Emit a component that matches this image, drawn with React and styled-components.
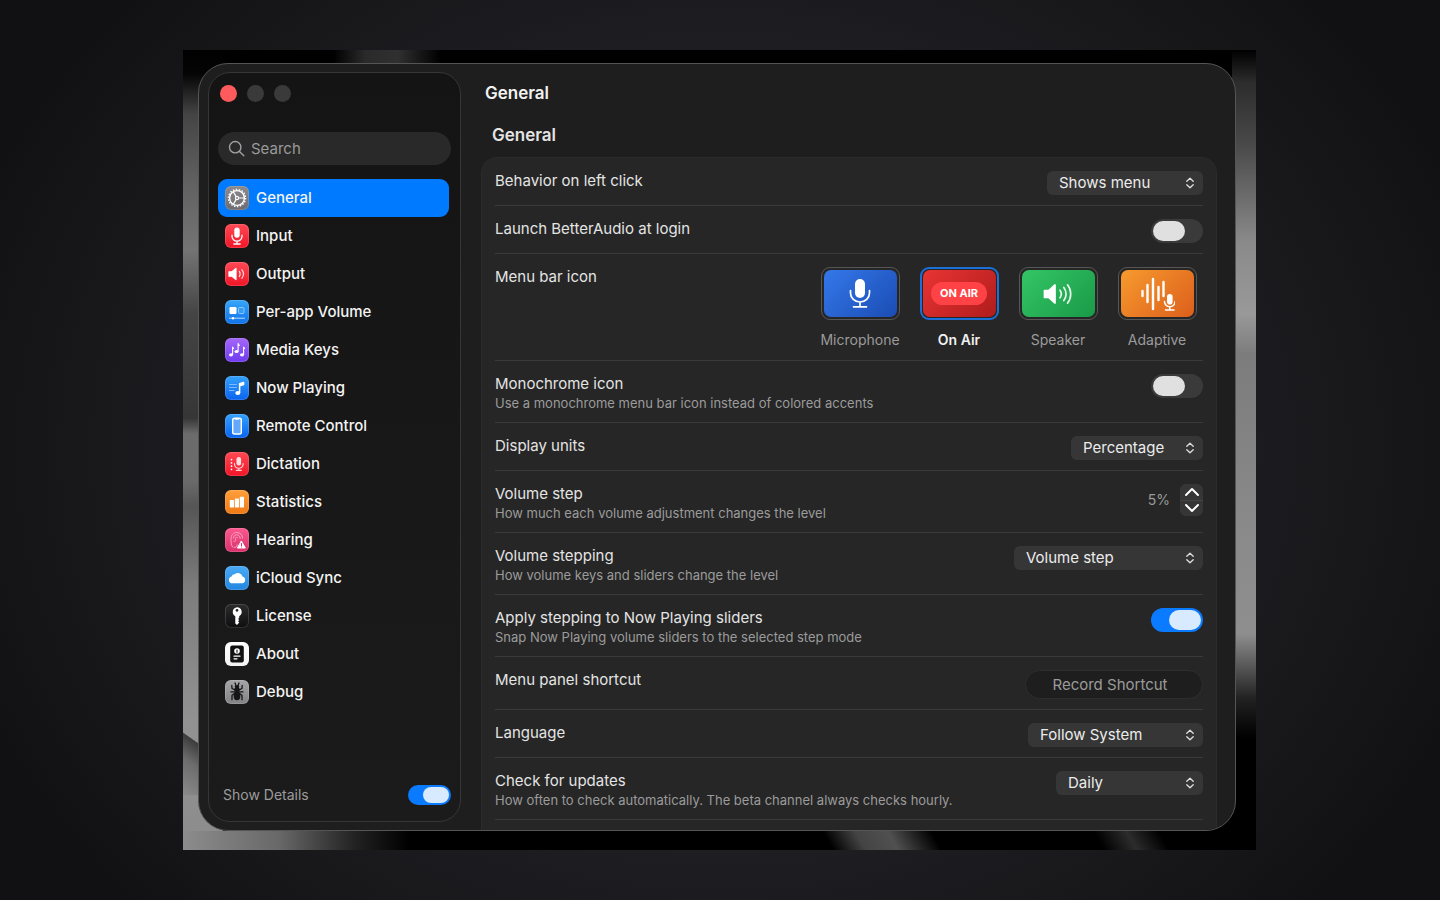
import React, { useState } from 'react';
import styled, { createGlobalStyle, css } from 'styled-components';

const Global = createGlobalStyle`
  *, *::before, *::after { box-sizing: border-box; }
  html, body { margin: 0; background: #111113; }
  body, button, input, select {
    font-family: Inter, "Liberation Sans", sans-serif;
    font-size: 15px;
    line-height: 20px;
    color: #e4e4e4;
  }
  button, input, select { margin: 0; padding: 0; border: 0; background: none; }
  h1, h2, p, ul { margin: 0; padding: 0; }
`;

const Page = styled.div`
  display: flex;
  min-height: 100vh;
  padding: 50px 184px 50px 183px;
  background: radial-gradient(ellipse 56% 75% at 50% 50%, #25252e 0%, #1f1f24 55%, #18181b 80%, #111113 100%);
`;

const Wallpaper = styled.div`
  flex: 1;
  display: flex;
  min-width: 0;
  padding: 13px 20px 19px 15px;
  background:
    linear-gradient(90deg, transparent 14%, #2a2a2a 17%, #303030 20%, transparent 24%) top / 100% 13px no-repeat,
    linear-gradient(60deg, transparent 60%, #444 63%, #505050 66%, transparent 70%, transparent 85%, #2c2c2c 88%, transparent 91%) bottom / 100% 19px no-repeat,
    linear-gradient(90deg, #8c8c8c 0, #686868 9%, #222 16%, #000 21%) bottom / 100% 19px no-repeat,
    linear-gradient(215deg, transparent 0, transparent 50%, #3c3c3c 51%, #6c6c6c 70%, #8a8a8a 100%) 0 640px / 30px 105px no-repeat,
    linear-gradient(180deg, #000 0, #050505 3%, #444 8%, #626262 17%, #747474 25%, #444 33%, #363636 46%, #6c6c6c 48%, #6a6a6a 54%, #555 57%, #7c7c7c 67%, #929292 84%, #8c8c8c 100%) left / 40px 100% no-repeat,
    linear-gradient(180deg, #000 0, #2c2c2c 4%, #4a4a4a 12%, #8a8a8a 24%, #999 33%, #7c7c7c 38%, #8a8a8a 60%, #8e8e8e 73%, #222 81%, #000 86%) right / 24px 100% no-repeat,
    #000;
`;

const Window = styled.div`
  flex: 1;
  display: flex;
  min-width: 0;
  padding: 8px 18px 8px 9px;
  border: 1px solid #555;
  border-radius: 30px;
  background: #1e1e1e;
  overflow: hidden;
`;

const Sidebar = styled.aside`
  flex: 0 0 253px;
  min-width: 0;
  display: flex;
  flex-direction: column;
  padding: 12px 9px 16px;
  border: 1px solid #363636;
  border-radius: 22px;
  background: linear-gradient(180deg, #141414, #1b1b1b);
`;

const Lights = styled.div`
  display: flex;
  gap: 10px;
  padding-left: 2px;
`;

const Light = styled.button`
  width: 17px;
  height: 17px;
  border-radius: 50%;
  background: ${(p) => (p.$close ? '#ff5b5c' : '#3a3a3a')};
`;

const SearchBox = styled.label`
  display: flex;
  align-items: center;
  gap: 6px;
  height: 33px;
  margin: 30px 0 14px;
  padding: 0 10px;
  border-radius: 17px;
  background: #292929;
  svg { flex: none; }
`;

const SearchInput = styled.input`
  flex: 1;
  min-width: 0;
  outline: none;
  &::placeholder { color: #9a9a9a; opacity: 1; }
`;

const NavList = styled.ul`
  list-style: none;
  flex: 1;
  padding-right: 2px;
`;

const NavLink = styled.a`
  display: flex;
  align-items: center;
  gap: 7px;
  height: 38px;
  padding: 0 7px;
  border-radius: 9px;
  color: #f4f4f4;
  font-size: 15px;
  font-weight: 500;
  text-decoration: none;
  background: ${(p) => (p.$active ? '#007aff' : 'none')};
`;

const Tile = styled.span`
  flex: none;
  display: flex;
  width: 24px;
  height: 24px;
  border-radius: 6px;
  background: linear-gradient(180deg, ${(p) => p.$from}, ${(p) => p.$to});
  box-shadow: inset 0 0 0 1px rgba(255, 255, 255, 0.14);
`;

const SidebarFoot = styled.label`
  display: flex;
  align-items: center;
  justify-content: space-between;
  padding-left: 5px;
  color: #9b9b9b;
  font-size: 14px;
`;

const Main = styled.main`
  flex: 1;
  min-width: 0;
  display: flex;
  flex-direction: column;
  padding-left: 20px;
  margin-bottom: -8px;
`;

const Title = styled.h1`
  padding: 9px 0 0 4px;
  font-size: 17px;
  font-weight: 600;
  line-height: 24px;
  color: #f2f2f2;
`;

const SectionTitle = styled.h2`
  padding: 18px 0 10px 11px;
  font-size: 17px;
  font-weight: 600;
  line-height: 24px;
`;

const Card = styled.section`
  flex: 1;
  padding: 0 13px;
  border: 1px solid #2b2b2b;
  border-bottom: 0;
  border-radius: 16px 16px 0 0;
  background: #262626;
`;

const Row = styled.div`
  display: flex;
  justify-content: space-between;
  align-items: flex-start;
  height: ${(p) => p.$height}px;
  padding: 13px 0 0;
  border-bottom: 1px solid #3a3a3a;
`;

const RowText = styled.div`
  display: flex;
  flex-direction: column;
`;

const RowLabel = styled.label`
  font-size: 15px;
  line-height: 20px;
`;

const RowNote = styled.p`
  color: #9b9b9b;
  font-size: 13px;
  line-height: 18px;
`;

const SelectWrap = styled.div`
  display: grid;
  align-items: center;
  width: ${(p) => p.$width}px;
  height: 24px;
  border-radius: 6px;
  background: #363636;
  > * { grid-area: 1 / 1; }
  svg { justify-self: end; margin-right: 7px; pointer-events: none; }
`;

const Select = styled.select`
  appearance: none;
  width: 100%;
  height: 24px;
  padding: 0 28px 0 12px;
  color: #ececec;
  line-height: 24px;
`;

const Switch = styled.input.attrs({ type: 'checkbox', role: 'switch' })`
  appearance: none;
  flex: none;
  display: flex;
  width: ${(p) => (p.$small ? 43 : 52)}px;
  height: ${(p) => (p.$small ? 20 : 24)}px;
  padding: 2px;
  border-radius: 12px;
  background: #3a3a3a;
  &::before {
    content: '';
    width: ${(p) => (p.$small ? 26 : 32)}px;
    border-radius: 10px;
    background: #e0e0e0;
  }
  &:checked { justify-content: flex-end; background: #0a7aff; }
  &:checked::before { background: #d8eaff; }
`;

const IconChoices = styled.div`
  display: flex;
  gap: 7px;
`;

const Choice = styled.label`
  display: flex;
  flex-direction: column;
  align-items: center;
  gap: 10px;
  width: 92px;
  font-size: 14px;
  color: ${(p) => (p.$on ? '#f0f0f0' : '#9b9b9b')};
  font-weight: ${(p) => (p.$on ? 600 : 400)};
`;

const ChoiceTile = styled.span`
  display: grid;
  place-items: center;
  width: 79px;
  height: 53px;
  padding: 1px;
  border: 1px solid #565656;
  border-radius: 9px;
  ${(p) => p.$on && css`border: 2px solid #1b6fd6; padding: 0;`}
  > * { grid-area: 1 / 1; }
`;

const ChoiceRadio = styled.input.attrs({ type: 'radio' })`
  appearance: none;
  width: 73px;
  height: 47px;
  border-radius: 7px;
  background: linear-gradient(135deg, ${(p) => p.$from}, ${(p) => p.$to});
`;

const AirBadge = styled.span`
  padding: 0 9px;
  border-radius: 12px;
  background: #ff4245;
  color: #fff;
  font-size: 11px;
  font-weight: 700;
  line-height: 23px;
  pointer-events: none;
`;

const StepperGroup = styled.div`
  display: flex;
  align-items: center;
  gap: 10px;
  color: #9b9b9b;
  font-size: 14px;
`;

const Stepper = styled.div`
  display: flex;
  flex-direction: column;
  width: 23px;
  border-radius: 6px;
  background: #363636;
`;

const StepButton = styled.button`
  display: flex;
  align-items: center;
  justify-content: center;
  height: 16px;
  & + & { border-top: 1px solid #444; }
`;

const ShortcutButton = styled.button`
  width: 178px;
  height: 29px;
  padding-right: 8px;
  border: 1px solid #2e2e2e;
  border-radius: 15px;
  background: #1e1e1e;
  color: #9b9b9b;
`;

const Svg = ({ size = 24, box = 24, children, ...rest }) => (
  <svg width={size} height={size} viewBox={`0 0 ${box} ${box}`} fill="none" stroke="#fff" strokeLinecap="round" strokeLinejoin="round" aria-hidden="true" {...rest}>
    {children}
  </svg>
);

const Gear = () => (
  <Svg strokeWidth="1.2">
    <circle cx="12" cy="12" r="7.400" strokeWidth="1.400" />
    <circle cx="12" cy="12" r="8.600" strokeWidth="1.400" strokeDasharray="1.500 1.500" strokeLinecap="butt" />
    <circle cx="12" cy="12" r="1.600" />
    <path d="M13.800 12H19M11.100 10.500 8.400 5.900M11.100 13.500 8.400 18.100" />
  </Svg>
);

const Mic = () => (
  <Svg strokeWidth="1.3">
    <rect x="9.3" y="3.6" width="5.4" height="10.2" rx="2.7" fill="#fff" stroke="none" />
    <path d="M7 11.2v1a5 5 0 0 0 10 0v-1M12 17.3v2.4M8.8 20h6.4" />
  </Svg>
);

const Speaker = () => (
  <Svg strokeWidth="1.2">
    <path d="M4 9.8h3l4-3.4v11.2l-4-3.4H4z" fill="#fff" />
    <path d="M14.3 9.4c1 1.5 1 3.7 0 5.2M16.8 7.7c2 2.500 2 6.100 0 8.600" stroke="#ffd4d6" />
  </Svg>
);

const Apps = () => (
  <Svg strokeWidth="1">
    <rect x="4.500" y="7" width="7" height="7" rx="1.200" fill="#fff" stroke="none" />
    <rect x="13.500" y="7.500" width="5.500" height="6" rx="1" stroke="#8cc8ff" fill="#339cf5" />
    <path d="M4.500 18.200h15" stroke="#b5dcff" />
    <circle cx="8" cy="18.200" r="1.200" fill="#fff" stroke="none" />
  </Svg>
);

const Notes = () => (
  <Svg strokeWidth="1.100">
    <g fill="#fff" stroke="none">
      <ellipse cx="6" cy="16.800" rx="2" ry="1.600" />
      <ellipse cx="11.500" cy="13.500" rx="2" ry="1.600" />
      <ellipse cx="17" cy="16.800" rx="2" ry="1.600" />
    </g>
    <path d="M7.600 16.500V9l1 1.500M13.100 13.200V5.500l1.200 2M18.600 16.500V9l1 1.500" />
  </Svg>
);

const NowPlaying = () => (
  <Svg strokeWidth="1.500">
    <path d="M4.500 8.500h7M4.500 11.500h7M4.500 14.500h4.500" stroke="#7fbcff" strokeWidth="1" />
    <path d="M14.600 16.500V7.600l4-1.200v2.200l-4 1.200" fill="#fff" />
    <ellipse cx="12.800" cy="17" rx="2.500" ry="2" fill="#fff" stroke="none" />
  </Svg>
);

const Phone = () => (
  <Svg strokeWidth="1.400">
    <rect x="7.700" y="4.200" width="8.600" height="15.800" rx="1.800" fill="#62a9fb" />
    <path d="M10.500 4.800h3" strokeWidth="1.800" />
  </Svg>
);

const Dictation = () => (
  <Svg strokeWidth="1.200">
    <path d="M6.500 7.500v10" strokeDasharray="0.100 3.200" strokeWidth="1.700" />
    <rect x="11.500" y="5" width="4.600" height="8.600" rx="2.300" fill="#ffe1e3" stroke="none" />
    <path d="M9.500 11.500v.5a4.300 4.300 0 0 0 8.600 0v-.5M13.800 16.500v1.600M11.300 18.300h5" stroke="#ffd4d6" />
  </Svg>
);

const Bars = () => (
  <Svg stroke="none" fill="#fff">
    <rect x="4.800" y="10" width="4.200" height="7.500" rx=".6" />
    <rect x="9.800" y="8.500" width="4.200" height="9" rx=".6" />
    <rect x="14.800" y="6.800" width="4.200" height="10.700" rx=".6" />
  </Svg>
);

const Hearing = () => (
  <Svg strokeWidth="1" stroke="#ff9fbd">
    <path d="M7.500 19c-1.200-2-1.500-4-1.500-7.500C6 7 8.200 4.500 11.800 4.500S17.600 7 17.600 10M8.500 10c0-2 1.200-3.200 3.300-3.200s3.400 1.600 3.400 3.600M9 13.500c1.500 0 2.200-1 1.600-2.300-.5-1.200.5-2.300 1.700-1.800M9 19.300c2 .6 3.200-.8 3.200-2.500" />
    <path d="M16.500 13.300 20.300 20h-7.600z" fill="#fff" stroke="#fff" />
    <path d="M16.500 15.500v2.200M16.500 19v.1" stroke="#e0356f" />
  </Svg>
);

const Cloud = () => (
  <Svg stroke="none" fill="#fff">
    <path d="M7.300 17.300a3.500 3.500 0 0 1-.7-6.900 3.100 3.100 0 0 1 3.100-2.200A4.700 4.700 0 0 1 17.500 10.600a3.400 3.400 0 0 1-.3 6.700z" />
  </Svg>
);

const Key = () => (
  <Svg stroke="none" fill="#fff">
    <path fillRule="evenodd" d="M12 3.200a4.800 4.800 0 0 1 2.200 9v1.500l-1.100 1.200 1.100 1.200-1.100 1.200 1.100 1.300-2.200 2.500-1.700-1.600v-7.300A4.800 4.800 0 0 1 12 3.200zm0 1.700a1.400 1.400 0 1 0 0 2.800 1.400 1.400 0 0 0 0-2.800z" />
  </Svg>
);

const About = () => (
  <Svg strokeWidth="1.200">
    <rect x="5.200" y="3.500" width="13.600" height="17" rx="2" fill="#111" stroke="none" />
    <circle cx="12" cy="9" r="2.800" fill="#fff" stroke="none" />
    <path d="M12 8v2.200" stroke="#111" strokeWidth="1.100" />
    <path d="M9 14.200h6M9 16.800h3" />
  </Svg>
);

const Bug = () => (
  <Svg stroke="#151515" strokeWidth="1.300">
    <ellipse cx="12" cy="15.800" rx="3.400" ry="4.500" fill="#151515" stroke="none" />
    <ellipse cx="12" cy="9.800" rx="2.800" ry="2.400" fill="#151515" stroke="none" />
    <ellipse cx="12" cy="6.700" rx="2.300" ry="1.800" fill="#151515" stroke="none" />
    <path d="M11 5.500 10 3M13 5.500 14 3M10 9.800 7 8.500 6.800 5.500M14 9.800l3-1.300.2-3M10 11.900H6M14 11.900h4M9.500 13.500 7 15.200v4.500M14.500 13.500l2.500 1.700v4.500" />
  </Svg>
);

const BigMic = () => (
  <Svg size={32} box={32} strokeWidth="1.700">
    <rect x="11" y="1" width="10" height="19" rx="5" fill="#fff" stroke="none" />
    <path d="M6.500 12.500v2.500a9.500 9 0 0 0 19 0v-2.500M16 24v4.500M9.500 28.800h13" />
  </Svg>
);

const BigSpeaker = () => (
  <Svg size={32} box={32} strokeWidth="1.700">
    <path d="M2.500 12.500h4.500l6-5.500v18l-6-5.500H2.500z" fill="#fff" />
    <path d="M18 12.200c1.600 2.300 1.600 5.300 0 7.600M21.800 9.500c3 3.800 3 9.200 0 13M25.500 6.800c4.300 5.400 4.300 13 0 18.400" stroke="#e6f8ec" />
  </Svg>
);

const Adaptive = () => (
  <Svg size={36} box={36} strokeWidth="2.400">
    <path d="M3.500 15v5M8.500 9v17M14 3v30M19.500 11v13M24.500 6v14" />
    <rect x="28" y="18" width="5.600" height="10.500" rx="2.800" fill="#fff" stroke="none" />
    <path d="M25.500 25.500a5.300 5.300 0 0 0 10.600 0M30.800 31v2.500M26.500 34h8.500" strokeWidth="1.500" />
  </Svg>
);

const UpDown = () => (
  <Svg size={12} box={12} strokeWidth="1.400" stroke="#dcdcdc">
    <path d="M2.800 4.200 6 1.200l3.200 3M2.800 7.800 6 10.800l3.200-3" />
  </Svg>
);

const NAV = [
  ['General', Gear, '#8b8b90', '#6b6b70'],
  ['Input', Mic, '#ff4a55', '#f01527'],
  ['Output', Speaker, '#ff4a55', '#f01527'],
  ['Per-app Volume', Apps, '#36a6f8', '#1173e8'],
  ['Media Keys', Notes, '#a567fa', '#6f3af0'],
  ['Now Playing', NowPlaying, '#36a2fb', '#0a63f0'],
  ['Remote Control', Phone, '#36a2fb', '#0a63f0'],
  ['Dictation', Dictation, '#ff4a55', '#f01527'],
  ['Statistics', Bars, '#ffa03c', '#ef7a14'],
  ['Hearing', Hearing, '#fb5a90', '#d9306b'],
  ['iCloud Sync', Cloud, '#4aaaf5', '#2386e0'],
  ['License', Key, '#2c2c2e', '#0e0e0f'],
  ['About', About, '#ffffff', '#f2f2f2'],
  ['Debug', Bug, '#a5a5a7', '#838385'],
];

const CHOICES = [
  ['Microphone', BigMic, '#3478ea', '#1b4cb4'],
  ['On Air', null, '#e93434', '#b01c1c'],
  ['Speaker', BigSpeaker, '#34c565', '#1a9a48'],
  ['Adaptive', Adaptive, '#f79a2e', '#dc5f1c'],
];

function SettingRow({ id, label, note, height, children }) {
  return (
    <Row $height={height || (note ? 62 : 48)}>
      <RowText>
        <RowLabel htmlFor={id}>{label}</RowLabel>
        {note && <RowNote>{note}</RowNote>}
      </RowText>
      {children}
    </Row>
  );
}

function Dropdown({ id, width, value }) {
  return (
    <SelectWrap $width={width}>
      <Select id={id} defaultValue={value}>
        <option>{value}</option>
      </Select>
      <UpDown />
    </SelectWrap>
  );
}

export default function App() {
  const [page, setPage] = useState('General');
  const [icon, setIcon] = useState('On Air');
  const [step, setStep] = useState(5);

  return (
    <>
      <Global />
      <Page>
        <Wallpaper>
          <Window>
            <Sidebar>
              <Lights>
                <Light $close aria-label="Close" />
                <Light aria-label="Minimize" />
                <Light aria-label="Zoom" />
              </Lights>
              <SearchBox>
                <Svg size={17} box={17} strokeWidth="1.400" stroke="#a0a0a0">
                  <circle cx="7.200" cy="7.200" r="5.700" />
                  <path d="m11.500 11.500 4.300 4.300" />
                </Svg>
                <SearchInput type="text" placeholder="Search" aria-label="Search" />
              </SearchBox>
              <NavList>
                {NAV.map(([name, Icon, from, to]) => (
                  <li key={name}>
                    <NavLink href="#" $active={name === page} onClick={() => setPage(name)}>
                      <Tile $from={from} $to={to}><Icon /></Tile>
                      {name}
                    </NavLink>
                  </li>
                ))}
              </NavList>
              <SidebarFoot>
                Show Details
                <Switch $small defaultChecked />
              </SidebarFoot>
            </Sidebar>

            <Main>
              <Title>General</Title>
              <SectionTitle>General</SectionTitle>
              <Card>
                <SettingRow id="click" label="Behavior on left click">
                  <Dropdown id="click" width={156} value="Shows menu" />
                </SettingRow>
                <SettingRow id="login" label="Launch BetterAudio at login">
                  <Switch id="login" />
                </SettingRow>
                <SettingRow label="Menu bar icon" height={107}>
                  <IconChoices role="radiogroup" aria-label="Menu bar icon">
                    {CHOICES.map(([name, Icon, from, to]) => (
                      <Choice key={name} $on={name === icon}>
                        <ChoiceTile $on={name === icon}>
                          <ChoiceRadio name="icon" $from={from} $to={to} checked={name === icon} onChange={() => setIcon(name)} />
                          {Icon ? <Icon /> : <AirBadge>ON AIR</AirBadge>}
                        </ChoiceTile>
                        {name}
                      </Choice>
                    ))}
                  </IconChoices>
                </SettingRow>
                <SettingRow id="mono" label="Monochrome icon" note="Use a monochrome menu bar icon instead of colored accents">
                  <Switch id="mono" />
                </SettingRow>
                <SettingRow id="units" label="Display units">
                  <Dropdown id="units" width={132} value="Percentage" />
                </SettingRow>
                <SettingRow id="step" label="Volume step" note="How much each volume adjustment changes the level">
                  <StepperGroup>
                    <output id="step">{step}%</output>
                    <Stepper>
                      <StepButton aria-label="Increase" onClick={() => setStep(step + 1)}>
                        <Svg size={16} box={16} strokeWidth="2"><path d="m2 11 6-6 6 6" /></Svg>
                      </StepButton>
                      <StepButton aria-label="Decrease" onClick={() => setStep(step - 1)}>
                        <Svg size={16} box={16} strokeWidth="2"><path d="m2 4 6 6 6-6" /></Svg>
                      </StepButton>
                    </Stepper>
                  </StepperGroup>
                </SettingRow>
                <SettingRow id="stepping" label="Volume stepping" note="How volume keys and sliders change the level">
                  <Dropdown id="stepping" width={189} value="Volume step" />
                </SettingRow>
                <SettingRow id="apply" label="Apply stepping to Now Playing sliders" note="Snap Now Playing volume sliders to the selected step mode">
                  <Switch id="apply" defaultChecked />
                </SettingRow>
                <SettingRow id="shortcut" label="Menu panel shortcut" height={53}>
                  <ShortcutButton id="shortcut">Record Shortcut</ShortcutButton>
                </SettingRow>
                <SettingRow id="language" label="Language">
                  <Dropdown id="language" width={175} value="Follow System" />
                </SettingRow>
                <SettingRow id="updates" label="Check for updates" note="How often to check automatically. The beta channel always checks hourly.">
                  <Dropdown id="updates" width={147} value="Daily" />
                </SettingRow>
              </Card>
            </Main>
          </Window>
        </Wallpaper>
      </Page>
    </>
  );
}
